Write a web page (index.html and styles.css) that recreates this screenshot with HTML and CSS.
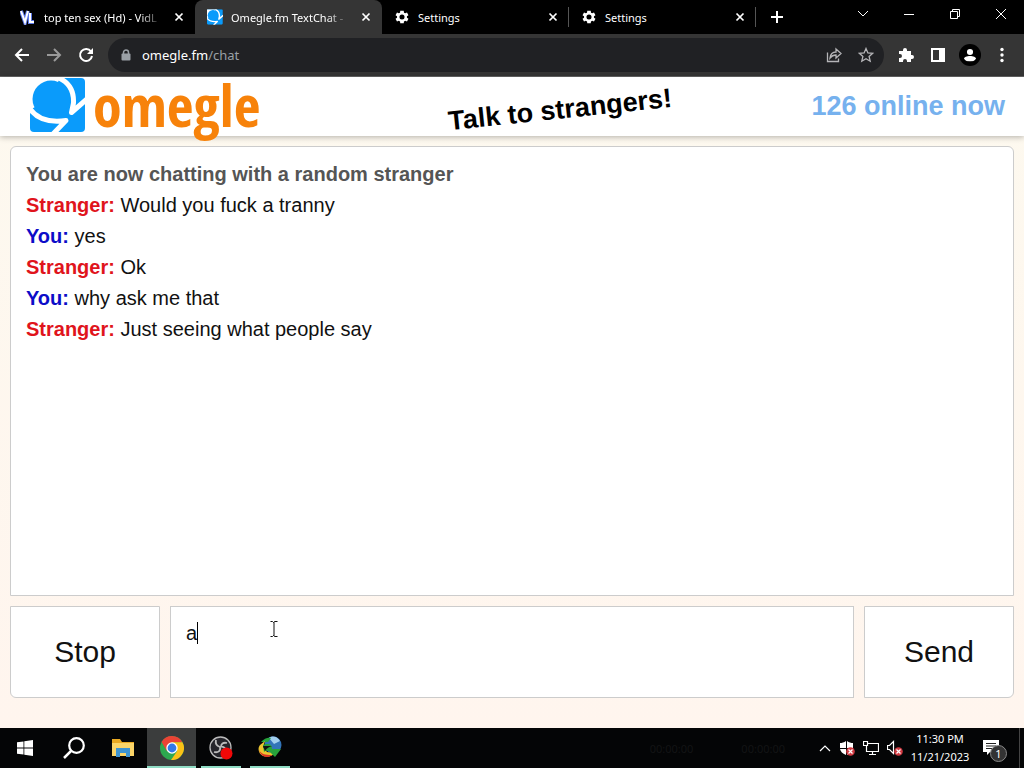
FILE: index.html
```html
<!DOCTYPE html>
<html lang="en">
<head>
    <meta charset="UTF-8">
    <meta name="viewport" content="width=device-width, initial-scale=1.0">
    <title>Omegle.fm TextChat</title>
    <link rel="stylesheet" href="styles.css">
</head>
<body>
    <svg class="defs" width="0" height="0" aria-hidden="true">
        <symbol id="gear" viewBox="0 0 24 24">
            <path fill="currentColor" fill-rule="evenodd" d="M19.4 13a7.500 7.500 0 0 0 0-2l2.300-1.700-2.200-3.900-2.700 1.100a7.500 7.500 0 0 0-1.800-1L14.600 2.500h-5.200L9 5.500a7.500 7.500 0 0 0-1.800 1L4.500 5.400 2.300 9.300 4.600 11a7.500 7.500 0 0 0 0 2l-2.300 1.700 2.200 3.900 2.700-1.100a7.500 7.500 0 0 0 1.800 1l.4 3h5.200l.4-3a7.500 7.500 0 0 0 1.800-1l2.700 1.100 2.200-3.900zM12 15.800a3.800 3.800 0 1 1 0-7.600 3.800 3.800 0 0 1 0 7.600z"/>
        </symbol>
        <symbol id="close" viewBox="0 0 10 10">
            <path d="M1.500 1.500l7 7M8.500 1.500l-7 7" fill="none" stroke="currentColor" stroke-width="1.700"/>
        </symbol>
        <symbol id="omegle-mark" viewBox="0 0 56 54">
            <rect width="55" height="54" rx="4" fill="#0a9bfb"/>
            <path fill="#fff" d="M0 0H30L20 20 0 32z"/>
            <circle cx="21" cy="21" r="18.500" fill="#0a9bfb"/>
            <path fill="none" stroke="#fff" stroke-width="5" stroke-linejoin="round" d="M29 0C40 5 44 14 43.500 25L41.500 34.500 57 21M0 31C7 41 18 45 36 42.500L23 56"/>
        </symbol>
    </svg>

    <header class="browser">
        <div class="tab-strip">
            <div class="tab">
                <svg class="favicon" viewBox="0 0 16 16"><path d="M1 2l4 11 3-11M10 4v9h4" fill="none" stroke="#5d78e8" stroke-width="4"/><path d="M1 2l4 11 3-11M10 4v9h4" fill="none" stroke="#fff" stroke-width="2"/></svg>
                <span class="tab-title fade">top ten sex (Hd) - VidL</span>
                <button class="tab-close" aria-label="Close tab"><svg><use href="#close"/></svg></button>
            </div>
            <div class="tab active">
                <svg class="favicon" viewBox="0 0 56 54"><use href="#omegle-mark"/></svg>
                <span class="tab-title fade">Omegle.fm TextChat -</span>
                <button class="tab-close" aria-label="Close tab"><svg><use href="#close"/></svg></button>
            </div>
            <div class="tab divided">
                <svg class="favicon"><use href="#gear"/></svg>
                <span class="tab-title">Settings</span>
                <button class="tab-close" aria-label="Close tab"><svg><use href="#close"/></svg></button>
            </div>
            <div class="tab divided">
                <svg class="favicon"><use href="#gear"/></svg>
                <span class="tab-title">Settings</span>
                <button class="tab-close" aria-label="Close tab"><svg><use href="#close"/></svg></button>
            </div>
            <button class="new-tab" aria-label="New tab"><svg viewBox="0 0 12 12"><path d="M6 0v12M0 6h12" stroke="#fff" stroke-width="2"/></svg></button>
            <div class="window-controls">
                <button aria-label="Search tabs"><svg viewBox="0 0 12 12"><path d="M1 3l5 5 5-5"/></svg></button>
                <button aria-label="Minimize"><svg viewBox="0 0 12 12"><path d="M1 6.500h10"/></svg></button>
                <button aria-label="Restore"><svg viewBox="0 0 12 12"><path d="M1.500 3.500h7v7h-7zM3.500 3.500v-2h7v7h-2"/></svg></button>
                <button aria-label="Close"><svg viewBox="0 0 12 12"><path d="M1 1l10 10M11 1L1 11"/></svg></button>
            </div>
        </div>
        <div class="toolbar">
            <button class="tool" aria-label="Back"><svg viewBox="0 0 16 16"><path d="M15 8H2M8 2L2 8l6 6"/></svg></button>
            <button class="tool dim" aria-label="Forward"><svg viewBox="0 0 16 16"><path d="M1 8h13M8 2l6 6-6 6"/></svg></button>
            <button class="tool" aria-label="Reload"><svg viewBox="0 0 16 16"><path d="M13 4.500A6 6 0 1 0 14 9"/><path class="solid" d="M15 1v6H9z"/></svg></button>
            <div class="address-bar">
                <svg class="lock" viewBox="0 0 10 12"><path d="M2.500 5V3.500a2.500 2.500 0 0 1 5 0V5" fill="none" stroke="#9aa0a6" stroke-width="1.500"/><rect x="0.500" y="4.500" width="9" height="7" rx="1" fill="#9aa0a6"/></svg>
                <a class="url" href="#">omegle.fm<span>/chat</span></a>
                <button class="page-action" aria-label="Share"><svg viewBox="0 0 16 16"><path d="M1.500 5.500v9h11v-3M4 11c.5-4 3-6 6-6V2l5 4.500-5 4.500V8C7.500 8 5.500 9 4 11z"/></svg></button>
                <button class="page-action" aria-label="Bookmark"><svg viewBox="0 0 16 16"><path d="M8 1.500l1.900 4.400 4.800.4-3.600 3.200 1.100 4.700L8 11.700l-4.200 2.500 1.100-4.700-3.600-3.200 4.800-.4z"/></svg></button>
            </div>
            <button class="tool" aria-label="Extensions"><svg viewBox="0 0 16 16"><path class="solid" d="M1 4h4V3a2 2 0 0 1 4 0v1h4v4h1a2 2 0 0 1 0 4h-1v3H9v-1a2 2 0 0 0-4 0v1H1v-4h1a2 2 0 0 0 0-4H1z"/></svg></button>
            <button class="tool" aria-label="Side panel"><svg viewBox="0 0 16 16"><path class="solid" fill-rule="evenodd" d="M1 1h14v14H1zM3 3v10h6V3z"/></svg></button>
            <button class="tool profile" aria-label="Profile"><svg viewBox="0 0 16 16"><circle class="solid" cx="8" cy="4.500" r="3.500"/><path class="solid" d="M1 15v-2c0-5 14-5 14 0v2z"/></svg></button>
            <button class="tool" aria-label="Menu"><svg viewBox="0 0 16 16"><circle class="solid" cx="8" cy="2.500" r="1.700"/><circle class="solid" cx="8" cy="8" r="1.700"/><circle class="solid" cx="8" cy="13.500" r="1.700"/></svg></button>
        </div>
    </header>

    <div class="page">
        <div class="site-header">
            <a class="logo" href="#">
                <svg class="logo-mark"><use href="#omegle-mark"/></svg>
                <span class="logo-text">omegle</span>
            </a>
            <div class="tagline">Talk to strangers!</div>
            <div class="online">126 online now</div>
        </div>

        <main class="chat">
            <div class="messages">
                <p class="status">You are now chatting with a random stranger</p>
                <p><b class="stranger">Stranger:</b> Would you fuck a tranny</p>
                <p><b class="you">You:</b> yes</p>
                <p><b class="stranger">Stranger:</b> Ok</p>
                <p><b class="you">You:</b> why ask me that</p>
                <p><b class="stranger">Stranger:</b> Just seeing what people say</p>
            </div>
            <div class="controls">
                <button class="stop">Stop</button>
                <div class="message-box">
                    <textarea class="message-input" aria-label="Message" autofocus>a</textarea>
                    <span class="caret"></span>
                    <svg class="pointer" viewBox="0 0 8 16"><path d="M.5.500h2l1 1 1-1h3M4 1v14M.5 15.500h2l1-1 1 1h3" fill="none" stroke="#111"/></svg>
                </div>
                <button class="send">Send</button>
            </div>
        </main>
    </div>

    <footer class="taskbar">
        <button class="task" aria-label="Start"><svg viewBox="0 0 16 16"><path fill="#fff" d="M0 2.300L6.500 1.400V7.600H0zM7.300 1.300L16 0V7.600H7.300zM0 8.400h6.500v6.200L0 13.700zM7.300 8.400H16V16l-8.700-1.300z"/></svg></button>
        <button class="task search" aria-label="Search"><svg viewBox="0 0 22 22"><circle cx="13.500" cy="8.500" r="7.300" fill="none" stroke="#fff" stroke-width="2.200"/><path d="M8 14l-7 7" stroke="#fff" stroke-width="2.500"/></svg></button>
        <button class="task" aria-label="File Explorer"><svg viewBox="0 0 22 22"><path fill="#e9a922" d="M0 2h8l2 3h12v5H0z"/><path fill="#fbd568" d="M0 6h22v13H0z"/><path fill="#3e94d1" d="M4 11h14v9h-4v-4H8v4H4z"/></svg></button>
        <button class="task current" aria-label="Google Chrome"><svg class="wide" viewBox="0 0 24 24"><circle cx="12" cy="12" r="12" fill="#2da94f"/><path fill="#ea4335" d="M1.600 6A12 12 0 0 1 22.400 6.200H12L6.800 15z"/><path fill="#fbc116" d="M22.400 6.200A12 12 0 0 1 11 24l6.200-9L12 6.200z"/><circle cx="12" cy="12" r="5.700" fill="#fff"/><circle cx="12" cy="12" r="4.400" fill="#3279e8"/></svg></button>
        <button class="task open" aria-label="OBS Studio"><svg class="wide" viewBox="0 0 24 24"><circle cx="11.500" cy="11.500" r="10.500" fill="#25252b" stroke="#bbb" stroke-width="1.300"/><path d="M7 4c-1 4 1 6 4 7M18 7c-4-1-6 1-6 4M11 11c1 4-2 6-6 5M11 11c3-1 6 1 6 4" fill="none" stroke="#bbb" stroke-width="1.800"/><circle cx="17.500" cy="17.500" r="6" fill="#f00808"/></svg></button>
        <button class="task open" aria-label="Internet Download Manager"><svg class="wide" viewBox="0 0 24 24"><circle cx="15" cy="9" r="8.500" fill="#3274b8"/><path fill="#a2cfef" d="M11 2c4-3 9-1 11 3l-6 3z"/><path fill="#27a33b" d="M3 6c3-4 8-5 10-4l-3 4z"/><path fill="#eac52f" d="M7 5L2 9c-3 4-1 9 3 11 5 2 9 0 12-3l-8-1-4-5z"/><path fill="#dc3024" d="M1 13c1 5 6 6 13 6-4 4-12 2-13-6z"/><path fill="#27a33b" d="M5 9c6-2 9-1 9 4h9l-6 8-5-5c-2-2-5-1-6 0z"/><path fill="#111" d="M5 10h9c-3 1-5 2-7 5z"/></svg></button>
        <div class="ghost" aria-hidden="true"><span>00:00:00</span><span>00:00:00</span></div>
        <div class="tray">
            <svg class="up" viewBox="0 0 12 12"><path d="M1 9l5-5 5 5"/></svg>
            <svg viewBox="0 0 16 16"><path class="shield" d="M7 1C5 2.500 3 3 1 3v5h6zM8 1c2 1.500 4 2 6 2v5H8zM1 9h6v6C3.500 13.500 1.500 11.500 1 9zM8 9h6c-.5 2.500-2.500 4.500-6 6z"/><circle cx="11.500" cy="11.500" r="4.300" class="alert"/><path d="M9.500 9.500l4 4M13.500 9.500l-4 4"/></svg>
            <svg viewBox="0 0 16 16"><path d="M5 3.500h10.500v8H3.500V6M.5 1.500h4v4h-4zM9.500 11.500v3M6 14.500h7"/></svg>
            <svg viewBox="0 0 16 16"><path d="M.5 5.500h2l4-4v12l-4-4h-2z"/><circle cx="11.500" cy="11.500" r="4.300" class="alert"/><path d="M9.500 9.500l4 4M13.500 9.500l-4 4"/></svg>
        </div>
        <div class="clock">11:30 PM<br>11/21/2023</div>
        <button class="notifications" aria-label="Notifications">
            <svg viewBox="0 0 16 16"><path fill="#fff" d="M0 0h16v12H7l-3 3v-3H0z"/><path stroke="#222" d="M3 3.500h10M3 6h10M3 8.500h7"/></svg>
            <span class="badge">1</span>
        </button>
    </footer>
</body>
</html>
```
FILE: styles.css
```css
:root {
    --toolbar: #353535;
    --address: #202124;
    --border: #ccc;
    --accent: #76b1ee;
    --orange: #f7820a;
}

* {
    margin: 0;
    padding: 0;
    box-sizing: border-box;
}

body {
    height: 100vh;
    display: flex;
    flex-direction: column;
    overflow: hidden;
    font-family: "Liberation Sans", Arial, sans-serif;
    background: #fff6ee;
}

button {
    border: none;
    background: none;
    color: inherit;
    font-family: inherit;
}

svg {
    display: block;
    flex: none;
}

.defs {
    position: absolute;
}

/* Browser */
.browser,
.taskbar {
    font-family: "Noto Sans", "Open Sans", sans-serif;
    font-size: 11px;
    color: #fff;
}

.tab-strip {
    display: flex;
    height: 34px;
    padding-left: 8px;
    background: #000;
}

.tab {
    flex: 0 1 187px;
    min-width: 0;
    display: flex;
    align-items: center;
    gap: 8px;
    padding: 0 8px 0 12px;
}

.tab.active {
    background: var(--toolbar);
    border-radius: 8px 8px 0 0;
}

.tab.divided {
    background: linear-gradient(#555, #555) no-repeat right center / 1px 20px;
}

.favicon {
    width: 16px;
    height: 16px;
}

.tab-title {
    flex: 1;
    white-space: nowrap;
}

.tab-title.fade {
    -webkit-mask-image: linear-gradient(90deg, #000 80%, transparent);
    mask-image: linear-gradient(90deg, #000 80%, transparent);
}

.tab-close {
    padding: 3px;
}

.tab-close svg {
    width: 10px;
    height: 10px;
}

.new-tab {
    padding: 0 15px;
}

.new-tab svg {
    width: 12px;
    height: 12px;
}

.window-controls {
    display: flex;
    margin-left: auto;
    height: 28px;
}

.window-controls button {
    width: 46px;
    display: flex;
    align-items: center;
    justify-content: center;
}

.window-controls svg {
    width: 12px;
    height: 12px;
    fill: none;
    stroke: #fff;
}

.toolbar {
    display: flex;
    align-items: center;
    height: 43px;
    padding: 0 6px;
    background: var(--toolbar);
    border-bottom: 1px solid #666;
}

.tool {
    width: 32px;
    height: 32px;
    display: flex;
    align-items: center;
    justify-content: center;
}

.tool svg {
    width: 16px;
    height: 16px;
    fill: none;
    stroke: #fff;
    stroke-width: 2;
}

.tool .solid {
    fill: #fff;
    stroke: none;
}

.tool.dim {
    opacity: 0.5;
}

.profile svg {
    width: 22px;
    height: 22px;
    padding: 4px;
    border-radius: 50%;
    background: #000;
}

.address-bar {
    flex: 1;
    display: flex;
    align-items: center;
    height: 34px;
    margin: 0 6px;
    padding: 0 2px 0 13px;
    border-radius: 17px;
    background: var(--address);
}

.lock {
    width: 10px;
    height: 12px;
}

.url {
    flex: 1;
    margin-left: 11px;
    font-size: 13px;
    color: #fff;
    text-decoration: none;
}

.url span {
    color: #9aa0a6;
}

.page-action {
    width: 32px;
    padding: 8px;
}

.page-action svg {
    width: 16px;
    height: 16px;
    fill: none;
    stroke: #b5b5b8;
    stroke-width: 1.3;
}

/* Site */
.page {
    flex: 1;
    min-height: 0;
    display: flex;
    flex-direction: column;
    background: linear-gradient(#fdf9ef, #fff5ee);
}

.site-header {
    display: flex;
    align-items: center;
    height: 59px;
    padding: 0 19px 0 30px;
    background: #fff;
    box-shadow: 0 1px 6px rgba(0, 0, 0, 0.3);
}

.logo {
    display: flex;
    align-items: center;
    gap: 7px;
    margin-bottom: 3px;
    text-decoration: none;
}

.logo-mark {
    width: 56px;
    height: 54px;
}

.logo-text {
    font-family: "Liberation Sans Narrow", "Open Sans Condensed", "DejaVu Sans Condensed", sans-serif;
    font-size: 58px;
    line-height: 54px;
    font-weight: bold;
    color: var(--orange);
}

.tagline {
    margin: 12px auto 0;
    padding-left: 48px;
    font-size: 27px;
    font-weight: bold;
    transform: rotate(-6deg);
}

.online {
    font-size: 27px;
    font-weight: bold;
    color: var(--accent);
}

.chat {
    flex: 1;
    min-height: 0;
    display: flex;
    flex-direction: column;
    gap: 10px;
    padding: 10px 10px 30px;
}

.messages {
    flex: 1;
    padding: 12px 15px;
    overflow: hidden;
    background: #fff;
    border: 1px solid var(--border);
    border-radius: 6px 6px 0 0;
    font-size: 20px;
    line-height: 31px;
    color: #111;
}

.status {
    font-weight: bold;
    color: #555;
}

.stranger {
    color: #e0141c;
}

.you {
    color: #0c0cc8;
}

.controls {
    display: flex;
    gap: 10px;
    height: 92px;
}

.stop,
.send {
    width: 150px;
    background: #fff;
    border: 1px solid var(--border);
    font-size: 30px;
    color: #111;
}

.stop {
    border-radius: 0 0 0 6px;
}

.send {
    border-radius: 0 0 6px 0;
}

.message-box {
    position: relative;
    flex: 1;
    display: flex;
}

.message-input {
    flex: 1;
    padding: 15px;
    border: 1px solid var(--border);
    outline: none;
    resize: none;
    background: #fff;
    caret-color: transparent;
    font-family: inherit;
    font-size: 20px;
    color: #111;
}

.caret {
    position: absolute;
    left: 27px;
    top: 16px;
    width: 1px;
    height: 22px;
    background: #000;
}

.pointer {
    position: absolute;
    left: 100px;
    top: 15px;
    width: 8px;
    height: 16px;
}

/* Taskbar */
.taskbar {
    display: flex;
    align-items: center;
    height: 40px;
    padding-right: 4px;
    background: #040506;
}

.task {
    width: 49px;
    height: 40px;
    display: flex;
    align-items: center;
    justify-content: center;
}

.task svg {
    width: 16px;
    height: 16px;
}

.task.search svg,
.task.search + .task svg {
    width: 22px;
    height: 22px;
}

.task svg.wide {
    width: 24px;
    height: 24px;
}

.task.current {
    background: #3b3d3d;
    box-shadow: inset 0 -2px #8fdcc4;
}

.task.open {
    background: linear-gradient(#8fdcc4, #8fdcc4) no-repeat center bottom / 40px 2px;
}

.ghost {
    flex: 1;
    display: flex;
    justify-content: flex-end;
    gap: 48px;
    padding-right: 34px;
    color: #131415;
}

.tray {
    display: flex;
    align-items: center;
    gap: 8px;
}

.tray svg {
    width: 16px;
    height: 16px;
    fill: none;
    stroke: #fff;
    stroke-width: 1.2;
}

.tray svg.up {
    width: 12px;
    height: 12px;
}

.tray .shield {
    fill: #fff;
    stroke: none;
}

.tray .alert {
    fill: #d13a42;
    stroke: none;
}

.clock {
    width: 74px;
    text-align: center;
    line-height: 18px;
}

.notifications {
    position: relative;
    padding: 0 14px 0 6px;
    margin-right: 6px;
}

.taskbar::after {
    content: "";
    width: 1px;
    height: 40px;
    background: #444;
}

.notifications svg {
    width: 16px;
    height: 16px;
}

.badge {
    position: absolute;
    left: 13px;
    top: 5px;
    width: 17px;
    height: 17px;
    border: 1px solid #888;
    border-radius: 50%;
    background: #333;
    font-size: 11px;
    line-height: 15px;
    text-align: center;
    color: #fff;
}
```
